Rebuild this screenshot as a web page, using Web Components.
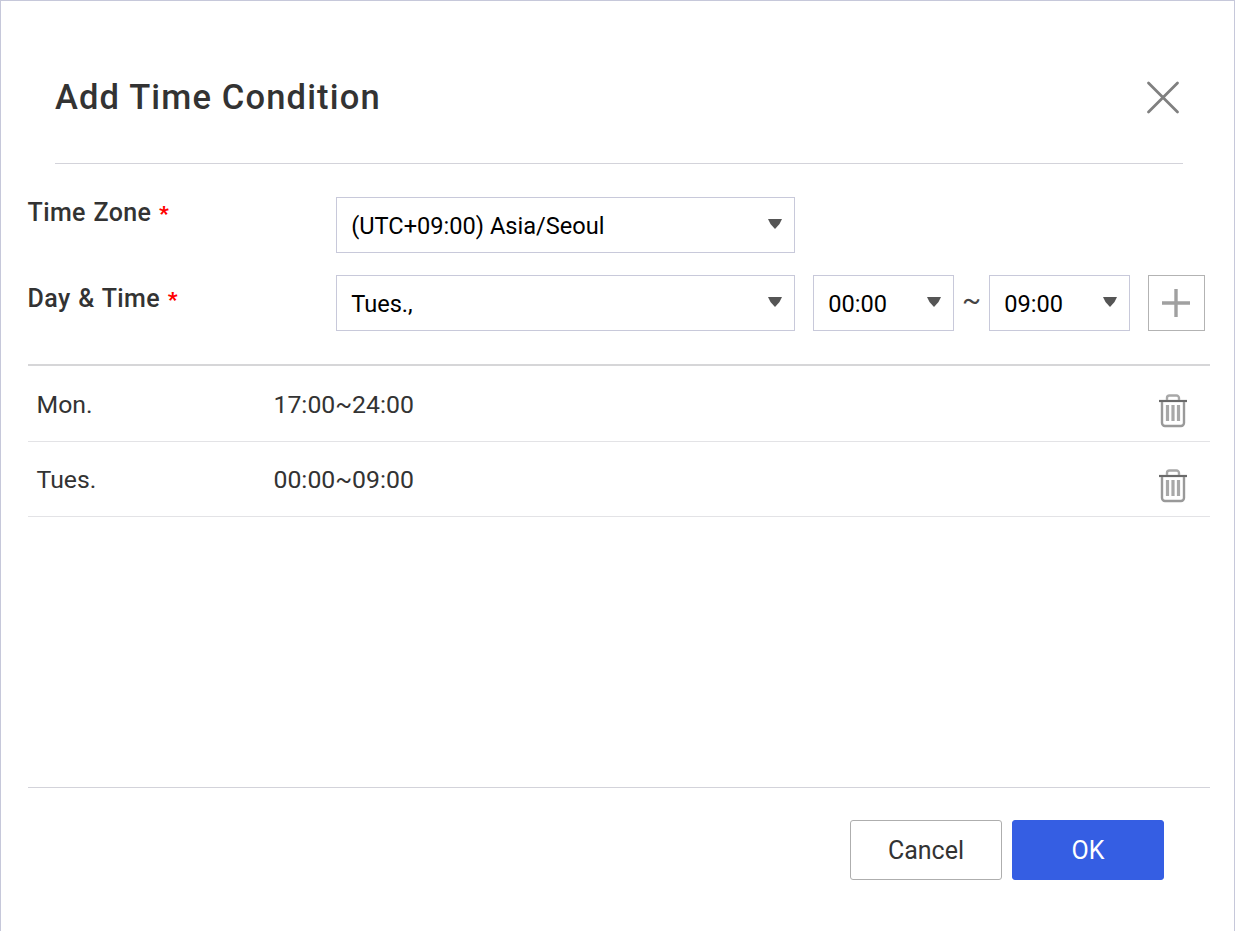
<!DOCTYPE html>
<html lang="en"><head><meta charset="utf-8"><title>Add Time Condition</title>
<style>html,body{margin:0;padding:0;background:#fff}body{font-family:Roboto,"Liberation Sans",sans-serif;color:#333}</style>
</head><body>
<x-dialog>
  <span slot="title">Add Time Condition</span>
  <x-form-row label="Time Zone" style="--label-pad:.5px">
    <x-select style="width:459px" value="(UTC+09:00) Asia/Seoul"></x-select>
  </x-form-row>
  <x-form-row label="Day &amp; Time" style="--label-pad:8.5px">
    <x-select style="width:459px" value="Tues.,"></x-select>
    <x-select style="width:141px;margin-left:18px" value="00:00"></x-select>
    <span style="width:35px;text-align:center;font-size:28px;line-height:50px;color:#444;align-self:flex-start">~</span>
    <x-select style="width:141px" value="09:00"></x-select>
    <x-add style="margin-left:18px"></x-add>
  </x-form-row>
  <x-list>
    <x-list-row day="Mon." time="17:00~24:00"></x-list-row>
    <x-list-row day="Tues." time="00:00~09:00"></x-list-row>
  </x-list>
  <x-button slot="footer">Cancel</x-button>
  <x-button slot="footer" primary>OK</x-button>
</x-dialog>
<script>
function def(name, html, setup){
  customElements.define(name, class extends HTMLElement{
    constructor(){super();this.attachShadow({mode:'open'}).innerHTML=html;}
    connectedCallback(){if(setup)setup(this,this.shadowRoot);}
  });
}
def('x-dialog',`<style>
:host{display:flex;flex-direction:column;box-sizing:border-box;width:1235px;height:931px;border:1px solid #c6c8da;border-bottom:0;background:#fff}
header{height:162px;margin:0 51px 0 54px;border-bottom:1px solid #d3d3da;display:flex;justify-content:space-between;box-sizing:content-box;flex:none}
h1{margin:0;padding-top:73.5px;font:500 34.5px/44px Roboto,sans-serif;color:#333;letter-spacing:1.15px}
svg{margin:80px 3px 0 0;filter:blur(.35px)}
main{flex:1;display:flex;flex-direction:column;padding:33px 24px 0 27px;gap:22px;min-height:0}
footer{flex:none;height:144px;margin:0 24px 0 27px;border-top:1px solid #d3d3da;box-sizing:border-box;padding:32px 46px 0 0;display:flex;justify-content:flex-end;gap:10px}
</style>
<header><h1><slot name="title"></slot></h1>
<svg width="34" height="34" viewBox="0 0 34 34"><path d="M2.5 2 31.5 31M31.5 2 2.5 31" stroke="#808080" stroke-width="2.8" stroke-linecap="round" fill="none"/></svg></header>
<main><slot></slot></main>
<footer><slot name="footer"></slot></footer>`);
def('x-form-row',`<style>
:host{display:flex;align-items:flex-start;flex:none}
label{width:308.5px;margin-left:-.5px;flex:none;padding-top:var(--label-pad,0);font:500 25px/30px Roboto,sans-serif;color:#333;letter-spacing:.4px;word-spacing:1px}
i{font-style:normal;font-weight:900;font-size:21px;color:#f00;margin-left:0}
</style><label></label><slot></slot>`,(h,s)=>{const l=s.querySelector('label');l.innerHTML='';l.append(h.getAttribute('label')+' ');const i=document.createElement('i');i.textContent='*';l.append(i);});
def('x-select',`<style>
:host{display:flex;align-items:center;box-sizing:border-box;height:56px;flex:none;border:1px solid #c8c9da;background:#fff;padding:0 12.5px 0 14.2px;justify-content:space-between}
span{font:23.6px/30px Roboto,"Liberation Sans",sans-serif;color:#000;padding-top:1px}
svg{filter:blur(.4px);margin-top:-3px}
</style><span></span><svg width="14" height="10" viewBox="0 0 14 10"><path d="M0 0H14L11.5 5 7 10 2.5 5Z" fill="#555"/></svg>`,(h,s)=>{s.querySelector('span').textContent=h.getAttribute('value');});
def('x-add',`<style>
:host{display:flex;align-items:center;justify-content:center;box-sizing:border-box;width:57px;height:56px;flex:none;border:1px solid #b3b3b3;background:#fff;padding-right:2px}
svg{filter:blur(.4px)}
</style><svg width="28" height="28" viewBox="0 0 28 28"><path d="M0 14H28M14 0V28" stroke="#a0a0a0" stroke-width="3.4" fill="none"/></svg>`);
def('x-list',`<style>
:host{display:block;margin-top:11px;border-top:2px solid #d6d6d8;padding-top:1px;flex:none}
</style><slot></slot>`);
def('x-list-row',`<style>
:host{display:flex;box-sizing:border-box;height:75px;border-bottom:1px solid #e3e3e6;padding-left:8.5px;font:24.8px/30px Roboto,sans-serif;color:#333;position:relative}
.d{width:237px;padding-top:23px}
.t{flex:1;padding-top:23px}
svg{margin:27px 22px 0 0;filter:blur(.35px)}
</style><div class="d"></div><div class="t"></div>
<svg width="30" height="34" viewBox="0 0 30 34" fill="none">
<path d="M1 7H29" stroke="#6a6a6a" stroke-width="2.2"/>
<path d="M9 6V4a2.5 2.5 0 0 1 2.5-2.5h7A2.5 2.5 0 0 1 21 4V6" stroke="#a8a8a8" stroke-width="2.4"/>
<path d="M4 8V29a3 3 0 0 0 3 3H23a3 3 0 0 0 3-3V8" stroke="#999" stroke-width="2.4"/>
<path d="M9.5 11V27M15 11V27M20.5 11V27" stroke="#a8a8a8" stroke-width="3.2"/>
</svg>`,(h,s)=>{s.querySelector('.d').textContent=h.getAttribute('day');s.querySelector('.t').textContent=h.getAttribute('time');});
def('x-button',`<style>
:host{display:flex;align-items:center;justify-content:center;box-sizing:border-box;width:152px;height:60px;flex:none;border:1px solid #aeaeae;border-radius:3px;background:#fff;color:#333;font:25px/30px Roboto,sans-serif;padding-top:2px}
:host([primary]){background:#355ee3;border-color:#355ee3;color:#fff}
</style><slot></slot>`);
</script>
</body></html>
